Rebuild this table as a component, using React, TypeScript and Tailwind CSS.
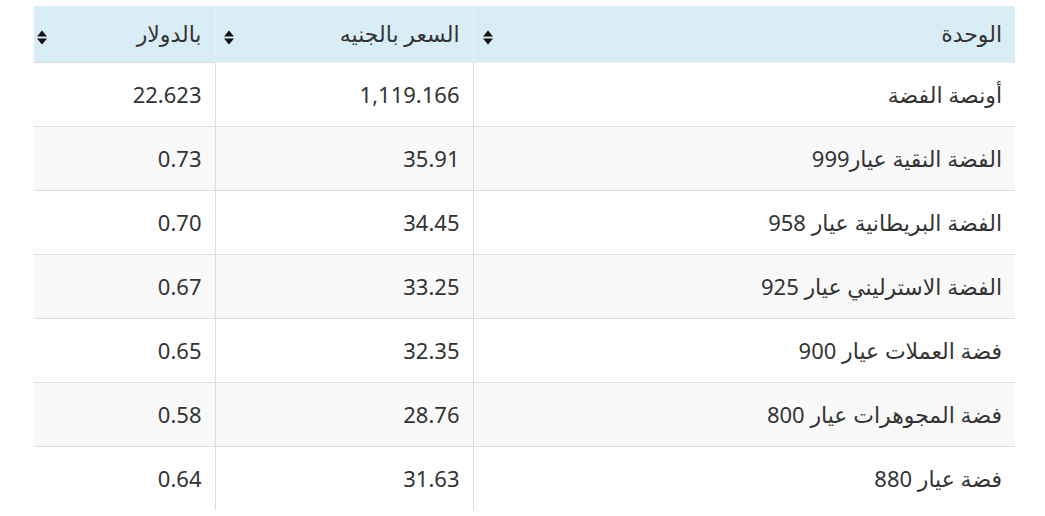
import React from "react";

const rows: [string, string, string][] = [
  ["أونصة الفضة", "1,119.166", "22.623"],
  ["الفضة النقية عيار999", "35.91", "0.73"],
  ["الفضة البريطانية عيار 958", "34.45", "0.70"],
  ["الفضة الاسترليني عيار 925", "33.25", "0.67"],
  ["فضة العملات عيار 900", "32.35", "0.65"],
  ["فضة المجوهرات عيار 800", "28.76", "0.58"],
  ["فضة عيار 880", "31.63", "0.64"],
];

const iconPos = ["left-[9px]", "left-[8px]", "left-[3px]"];

function SortIcon({ pos }: { pos: string }) {
  return (
    <svg width="10" height="15" viewBox="0 0 10 15" className={`absolute ${pos} top-[24px]`}>
      <path d="M5 0.5 L10 6.5 H0 Z" fill="#111" />
      <path d="M5 14.5 L10 8.5 H0 Z" fill="#111" />
    </svg>
  );
}

export default function App() {
  return (
    <div className="w-[1045px] h-[516px] bg-white pt-[6px] pl-[34px]" style={{ fontFamily: '"Noto Sans", "DejaVu Sans", sans-serif' }}>
      <table dir="rtl" className="w-[981px] border-collapse table-fixed text-[#333] text-[22px]">
        <colgroup>
          <col className="w-[542px]" />
          <col className="w-[258px]" />
          <col className="w-[181px]" />
        </colgroup>
        <thead>
          <tr className="bg-[#d9edf7] h-[56px]">
            {["الوحدة", "السعر بالجنيه", "بالدولار"].map((h, i) => (
              <th
                key={i}
                className={`relative text-right font-normal pr-[13px] pl-[28px] ${i < 2 ? "border-l border-[#e6f0f5]" : ""} border-b border-[#ddd]`}
              >
                {h}
                <SortIcon pos={iconPos[i]} />
              </th>
            ))}
          </tr>
        </thead>
        <tbody>
          {rows.map((r, ri) => (
            <tr key={ri} className={`h-[64px] ${ri % 2 === 1 ? "bg-[#f9f9f9]" : "bg-white"}`}>
              {r.map((c, ci) => (
                <td
                  key={ci}
                  className={`text-right pr-[13px] ${ci < 2 ? "border-l" : ""} border-[#ddd] ${ri < rows.length - 1 ? "border-b" : ""}`}
                >
                  {c}
                </td>
              ))}
            </tr>
          ))}
        </tbody>
      </table>
    </div>
  );
}
